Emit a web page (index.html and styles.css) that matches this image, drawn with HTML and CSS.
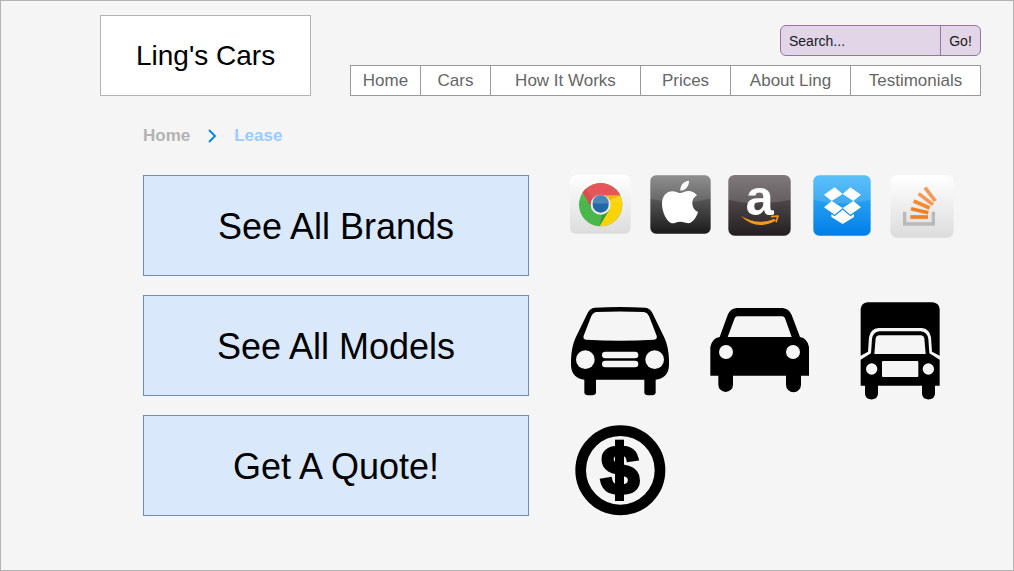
FILE: index.html
```html
<!DOCTYPE html>
<html lang="en">
<head>
<meta charset="utf-8">
<meta name="viewport" content="width=device-width, initial-scale=1">
<title>Ling's Cars</title>
<link rel="stylesheet" href="styles.css">
</head>
<body>
<div class="page">
  <header class="header">
    <a class="logo" href="#">Ling's Cars</a>
    <div class="header-tools">
      <form class="search" role="search">
        <input class="search-input" type="text" placeholder="Search..." aria-label="Search">
        <button class="search-button" type="button">Go!</button>
      </form>
      <nav class="nav" aria-label="Main">
        <a class="nav-link" href="#">Home</a>
        <a class="nav-link" href="#">Cars</a>
        <a class="nav-link" href="#">How It Works</a>
        <a class="nav-link" href="#">Prices</a>
        <a class="nav-link" href="#">About Ling</a>
        <a class="nav-link" href="#">Testimonials</a>
      </nav>
    </div>
  </header>

  <nav class="breadcrumb" aria-label="Breadcrumb">
    <a class="crumb" href="#">Home</a>
    <svg class="crumb-arrow" width="10" height="14" viewBox="0 0 10 14" aria-hidden="true"><path d="M2 1L8 7L2 13" fill="none" stroke="#0a85f0" stroke-width="2"/></svg>
    <a class="crumb crumb-current" href="#">Lease</a>
  </nav>

  <main class="main">
    <div class="actions">
      <button class="action" type="button">See All Brands</button>
      <button class="action" type="button">See All Models</button>
      <button class="action" type="button">Get A Quote!</button>
    </div>

    <div class="pictures">
      <div class="brands">
        <svg width="61" height="59" viewBox="30 30 183 177" role="img" aria-label="Chrome">
          <defs>
            <linearGradient id="light" x1="0" y1="0" x2="0" y2="1"><stop offset="0" stop-color="#fff"/><stop offset="1" stop-color="#dcdcdc"/></linearGradient>
            <clipPath id="chrome-disc"><circle cx="122" cy="119" r="65"/></clipPath>
          </defs>
          <rect x="30" y="30" width="182" height="176" rx="18" fill="url(#light)"/>
          <g clip-path="url(#chrome-disc)">
            <rect x="50" y="50" width="150" height="140" fill="#4bb649"/>
            <path d="M122 91H200V190H115L150 131Z" fill="#fbd30b"/>
            <path d="M66 79L50 50H200V91H122A30 30 0 0 0 93 126Z" fill="#e54b4f"/>
            <path d="M93 126L66 79L76 70L102 105Z" fill="#a3202a" opacity=".2"/>
            <path d="M122 91H184L150 106Z" fill="#b8860b" opacity=".3"/>
            <path d="M148 133L119 184L126 147Z" fill="#1d6b25" opacity=".35"/>
            <path d="M50 50H200V104Q122 122 50 104Z" fill="#fff" opacity=".06"/>
          </g>
          <circle cx="122" cy="119" r="30" fill="#ececec"/>
          <circle cx="122" cy="119" r="24" fill="#2369a8"/>
          <path d="M98 114A24 24 0 0 1 146 114Q122 118 98 114Z" fill="#4b86b9"/>
        </svg>

        <svg width="61" height="59" viewBox="270 30 183 177" role="img" aria-label="Apple">
          <defs><linearGradient id="dark" x1="0" y1="0" x2="0" y2="1"><stop offset="0" stop-color="#808080"/><stop offset="1" stop-color="#1a1a1a"/></linearGradient></defs>
          <rect x="271" y="31" width="181" height="175" rx="17" fill="url(#dark)"/>
          <path d="M271 101V48Q271 31 288 31H435Q452 31 452 48V101Q361 123 271 101Z" fill="#fff" opacity=".12"/>
          <path d="M360 84C368 84 376 77 388 78C398 79 406 84 411 91C400 98 396 106 397 117C398 129 405 137 414 141C410 155 400 170 390 174C380 176 372 170 361 170C350 170 344 176 335 175C322 172 306 143 306 117C306 93 320 79 337 79C346 79 354 84 360 84Z" fill="#fff"/>
          <path d="M361 77C360 60 372 48 387 47C388 62 376 77 361 77Z" fill="#fff"/>
        </svg>

        <svg class="brand-lettered" width="63" height="61" viewBox="24 30 189 183" role="img" aria-label="Amazon">
          <defs><linearGradient id="plum" x1="0" y1="0" x2="0" y2="1"><stop offset="0" stop-color="#6b6467"/><stop offset="1" stop-color="#231e20"/></linearGradient></defs>
          <rect x="25" y="30" width="187" height="182" rx="19" fill="url(#plum)"/>
          <path d="M25 104V49Q25 30 44 30H193Q212 30 212 49V104Q118 126 25 104Z" fill="#fff" opacity=".14"/>
          <text class="brand-letter" x="119" y="149" text-anchor="middle">a</text>
          <path d="M62 152Q113 183 164 161L167 167Q109 199 62 152Z" fill="#f7981d"/>
          <path d="M153 155L174 153L168 172" fill="none" stroke="#f7981d" stroke-width="5" stroke-linejoin="round"/>
        </svg>

        <svg width="58" height="61" viewBox="39 30 174 183" role="img" aria-label="Dropbox">
          <defs><linearGradient id="blue" x1="0" y1="0" x2="0" y2="1"><stop offset="0" stop-color="#42b8f8"/><stop offset="1" stop-color="#007ee8"/></linearGradient></defs>
          <rect x="40" y="31" width="172" height="181" rx="18" fill="url(#blue)"/>
          <path d="M40 104V49Q40 31 58 31H194Q212 31 212 49V104Q126 126 40 104Z" fill="#fff" opacity=".13"/>
          <path d="M104 67L128 87L95 108L72 89ZM151 67L183 89L160 108L128 87ZM95 108L128 129L104 149L72 127ZM160 108L183 127L151 149L128 129ZM94 147L104 154L128 134L151 154L162 147V156L128 177L94 156Z" fill="#fff"/>
        </svg>

        <svg width="64" height="63" viewBox="270 30 192 189" role="img" aria-label="Stack Overflow">
          <rect x="271" y="31" width="190" height="187" rx="20" fill="url(#light)"/>
          <path d="M314 140V177H400V140" fill="none" stroke="#b9b9b9" stroke-width="10"/>
          <g fill="none" stroke-width="11">
            <path d="M331 156H384" stroke="#f47f20"/>
            <path d="M333 131L385 143" stroke="#f47f20"/>
            <path d="M341 108L389 129" stroke="#f58a35"/>
            <path d="M356 86L399 119" stroke="#f79852"/>
            <path d="M375 68L406 108" stroke="#f79852"/>
          </g>
        </svg>
      </div>

      <div class="vehicles">
        <svg width="110" height="110" viewBox="30 0 330 330" role="img" aria-label="Car with grille">
          <path fill-rule="evenodd" d="M104 38Q180 34 256 38Q270 40 276 52L314 130Q326 158 327 195V210C327 238 308 253 287 254V293Q286 301 270 301Q254 301 253 293V254H108V293Q107 301 90 301Q74 301 73 293V254C52 253 33 238 33 210V195Q34 158 46 130L84 52Q90 40 104 38ZM108 51Q180 48 252 51Q262 53 267 63L290 122Q293 132 282 134Q180 140 78 134Q68 132 71 122L94 63Q99 53 108 51Z"/>
          <g fill="#f5f5f5"><circle cx="76" cy="194" r="28"/><circle cx="284" cy="194" r="28"/><rect x="126" y="170" width="109" height="20" rx="10"/><rect x="126" y="197" width="109" height="20" rx="10"/></g>
        </svg>
        <svg width="110" height="110" viewBox="30 0 330 330" role="img" aria-label="Car">
          <path fill-rule="evenodd" d="M110 39H248Q267 41 275 60L300 126Q322 130 327 156V242H303V269A22 22 0 0 1 258 269V242H99V269A22 22 0 0 1 55 269V242H31V156Q36 130 59 126L83 60Q90 41 110 39ZM112 64Q107 64 104 70L83 126H275L255 70Q252 64 247 64Z"/>
          <g fill="#f5f5f5"><circle cx="78" cy="171" r="21"/><circle cx="279" cy="171" r="21"/></g>
        </svg>
        <svg width="90" height="110" viewBox="30 0 270 330" role="img" aria-label="Truck">
          <path d="M32 182V42Q34 24 52 22H248Q267 24 269 42V182L246 170L243 127Q239 101 215 99H86Q61 101 57 127L54 170Z"/>
          <path fill-rule="evenodd" d="M88 109H212Q232 111 235 132L238 175L269 194V272H255V298A20 20 0 0 1 216 298V272H84V298A20 20 0 0 1 45 298V272H32V194L63 175L66 132Q69 111 88 109ZM86 121Q78 122 77 130L73 177H227L223 130Q222 122 214 121Z"/>
          <g fill="#f5f5f5"><circle cx="65" cy="222" r="17"/><circle cx="235" cy="222" r="17"/><rect x="96" y="198" width="109" height="48" rx="3"/></g>
        </svg>
      </div>

      <svg class="money" width="110" height="110" viewBox="15 0 330 330" role="img" aria-label="Price">
        <circle cx="166" cy="166" r="119" fill="none" stroke="#000" stroke-width="32"/>
        <text class="money-sign" x="165" y="238" text-anchor="middle">$</text>
        <path d="M150 74H177V258H150Z"/>
      </svg>
    </div>
  </main>
</div>
</body>
</html>
```
FILE: styles.css
```css
* { box-sizing: border-box; }

body {
  margin: 0;
  background: #f5f5f5;
  color: #000;
  font-family: "Liberation Sans", Arial, sans-serif;
}

a { color: inherit; text-decoration: none; }

svg { display: block; }

.page {
  min-height: 100vh;
  padding: 14px 32px 24px 99px;
  border: 1px solid #b3b3b3;
}

.header {
  display: flex;
  align-items: flex-end;
  justify-content: space-between;
  gap: 24px;
}

.logo {
  padding: 24px 35px;
  border: 1px solid #b3b3b3;
  background: #fff;
  font-size: 28px;
  line-height: 31px;
  white-space: nowrap;
}

.header-tools {
  display: flex;
  flex-direction: column;
  align-items: flex-end;
  gap: 9px;
}

.search {
  display: flex;
  width: 201px;
  height: 31px;
  border: 1px solid #9673a6;
  border-radius: 6px;
  background: #e1d5e7;
  overflow: hidden;
}

.search-input,
.search-button {
  border: 0;
  background: transparent;
  color: #1a1a1a;
  font: 14px "Liberation Sans", Arial, sans-serif;
}

.search-input {
  flex: 1;
  min-width: 0;
  padding: 0 8px;
}

.search-input::placeholder { color: #1a1a1a; opacity: 1; }

.search-button {
  width: 40px;
  padding: 0;
  border-left: 1px solid #9673a6;
}

.nav {
  display: grid;
  grid-template-columns: 70px 70px 150px 90px 120px 131px;
  border: solid #999;
  border-width: 1px 0 1px 0;
  background: #fff;
}

.nav-link {
  border-left: 1px solid #999;
  color: #666;
  font-size: 17px;
  line-height: 29px;
  text-align: center;
}

.nav-link:last-child { border-right: 1px solid #999; }

.breadcrumb {
  display: flex;
  align-items: center;
  gap: 17px;
  padding: 30px 0 29px 43px;
  font-size: 17px;
  font-weight: bold;
  line-height: 20px;
}

.crumb { color: #b3b3b3; }

.crumb-current { color: #99ccff; }

.main {
  display: flex;
  gap: 41px;
  padding-left: 43px;
}

.actions {
  display: grid;
  flex: 1;
  max-width: 386px;
  gap: 19px;
  align-content: start;
}

.action {
  padding: 30px 16px 28px;
  border: 1px solid #6c8ebf;
  background: #dae8fc;
  color: #000;
  font: 36px/41px "Liberation Sans", Arial, sans-serif;
}

.pictures {
  display: grid;
  grid-template-rows: 120px 120px 110px;
}

.brands {
  display: grid;
  grid-template-columns: 80px 78px 85px 77px 64px;
  align-items: start;
}

.vehicles {
  display: grid;
  grid-template-columns: 140px 150px 90px;
  align-items: start;
}

.brand-lettered { overflow: visible; }

.brand-letter {
  fill: #fff;
  font: bold 152px "Liberation Sans", Arial, sans-serif;
}

.money-sign {
  stroke: #000;
  stroke-width: 10px;
  font: bold 208px "Liberation Sans", Arial, sans-serif;
}
```
